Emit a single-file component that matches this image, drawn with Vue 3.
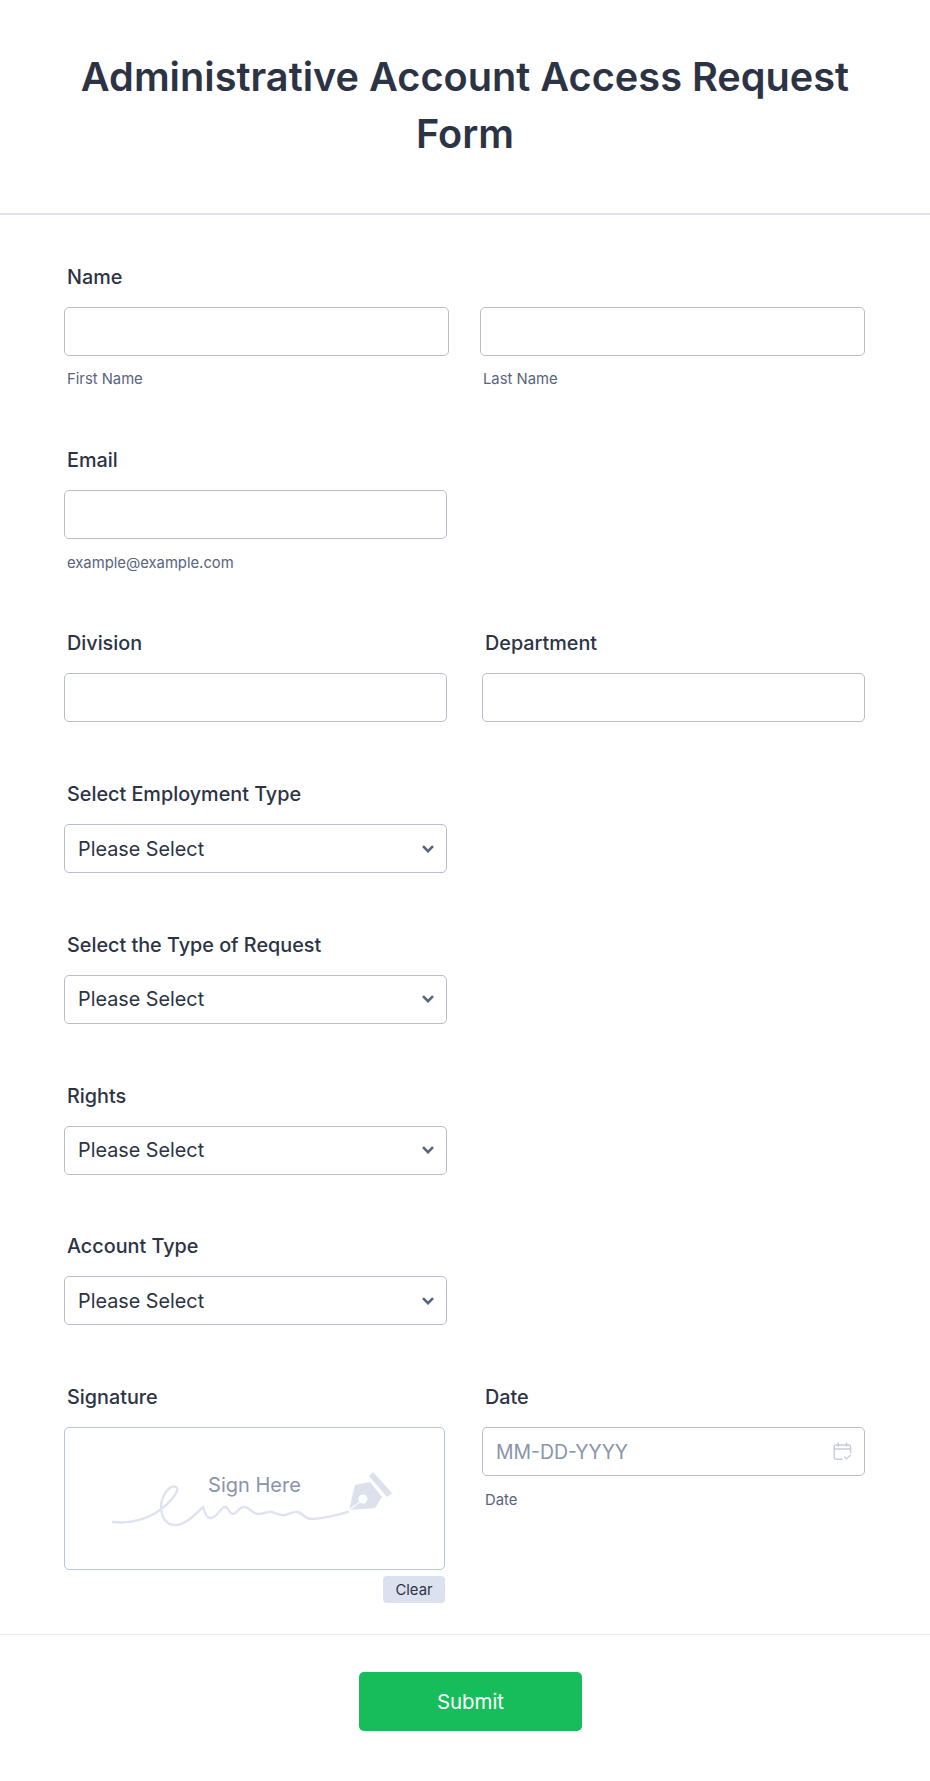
<script setup>
const selects = ['Select Employment Type', 'Select the Type of Request', 'Rights', 'Account Type']
</script>

<template>
  <div class="page">
    <header class="header">
      <h1 class="title">Administrative Account Access Request Form</h1>
    </header>

    <form class="form" @submit.prevent>
      <div class="row name-row">
        <div class="label">Name</div>
        <div class="pair">
          <div class="col wide">
            <input class="input" type="text" />
            <div class="sub">First Name</div>
          </div>
          <div class="col wide">
            <input class="input" type="text" />
            <div class="sub">Last Name</div>
          </div>
        </div>
      </div>

      <div class="row email-row">
        <div class="col half">
          <div class="label">Email</div>
          <input class="input" type="text" />
          <div class="sub low">example@example.com</div>
        </div>
      </div>

      <div class="row split">
        <div class="col half">
          <div class="label">Division</div>
          <input class="input" type="text" />
        </div>
        <div class="col right">
          <div class="label">Department</div>
          <input class="input" type="text" />
        </div>
      </div>

      <div class="row select-row" v-for="name in selects" :key="name">
        <div class="col half">
          <div class="label">{{ name }}</div>
          <div class="select">
            <span>Please Select</span>
            <svg class="chevron" width="12" height="8" viewBox="0 0 12 8" fill="none">
              <path d="M1 1.2 6 6.2 11 1.2" stroke="#57647e" stroke-width="2.6" />
            </svg>
          </div>
        </div>
      </div>

      <div class="row split last">
        <div class="col sig">
          <div class="label">Signature</div>
          <div class="pad">
            <svg class="scribble" width="381" height="143" viewBox="0 0 381 143" fill="none">
              <path
                d="M49 95C66 97 84 92 96 83C106 76 117 63 112 60C105 57 97 70 97 80C97 92 104 99 113 98C124 97 134 84 139 80C141 86 142 90 146 91C152 92 157 80 161 80C165 80 165 87 169 87C173 87 175 80 180 80C186 80 188 87 194 87C200 87 204 84 208 85C212 86 216 89 221 88C226 87 230 84 234 85C240 87 240 92 248 92C260 92 272 88 284 85"
                stroke="#dfe3f0" stroke-width="2.4" stroke-linecap="round"
              />
              <path d="M285 83 291 58 306 55 318 70 311 81Z" fill="#dde1ee" />
              <circle cx="299" cy="72" r="4.5" fill="#fff" />
              <path d="M285 83 297 74" stroke="#fff" stroke-width="1.2" />
              <path d="M309 45 328 66 323 70 305 49Z" fill="#dde1ee" />
            </svg>
            <span class="sign-here">Sign Here</span>
          </div>
          <div class="clear-wrap">
            <button class="clear" type="button">Clear</button>
          </div>
        </div>
        <div class="col right">
          <div class="label">Date</div>
          <div class="date">
            <span>MM-DD-YYYY</span>
            <svg width="19" height="19" viewBox="0 0 19 19" fill="none" stroke="#c8ccda" stroke-width="1.4" stroke-linecap="round">
              <path d="M9 17.3H3.2A2 2 0 0 1 1.2 15.3V5A2 2 0 0 1 3.2 3H15.6A2 2 0 0 1 17.6 5V10.5" />
              <path d="M1.2 7H17.6M5.3 1V4M13.5 1V4" />
              <path d="M11.5 15 13.5 17 17.5 13" stroke-width="1.1" />
            </svg>
          </div>
          <div class="sub low">Date</div>
        </div>
      </div>

      <div class="actions">
        <button class="submit" type="submit">Submit</button>
      </div>
    </form>
  </div>
</template>

<style>
body {
  background: #fff;
}
</style>

<style scoped>
.page {
  width: 930px;
  min-height: 1781px;
  background: #fff;
  color: #2c3345;
  font-family: Inter, "Liberation Sans", sans-serif;
}

.header {
  padding: 49px 65px 50px;
  border-bottom: 2px solid #dfe1ee;
  text-align: center;
}

.title {
  margin: 0;
  font-size: 39.7px;
  font-weight: 600;
  line-height: 57px;
}

.form {
  padding-top: 48px;
}

.row {
  padding: 0 65px 0 64px;
  margin-bottom: 58px;
}

.name-row {
  margin-bottom: 57px;
}

.email-row {
  margin-bottom: 56px;
}

.select-row {
  margin-bottom: 57.75px;
}

.split {
  display: flex;
  justify-content: space-between;
}

.col {
  display: flex;
  flex-direction: column;
}

.half {
  width: 383px;
}

.right {
  width: 383px;
}

.sig {
  width: 381px;
}

.pair {
  display: flex;
  gap: 31px;
}

.wide {
  flex: 1;
}

.label {
  margin: 1px 0 16px 3px;
  font-size: 19.8px;
  font-weight: 500;
  line-height: 27px;
}

.input,
.select,
.date {
  box-sizing: border-box;
  width: 100%;
  height: 49px;
  border: 1px solid #b8bdc9;
  border-radius: 5px;
  background: #fff;
  outline: none;
}

.select,
.date {
  display: flex;
  align-items: center;
  justify-content: space-between;
  padding: 0 12px 0 13px;
  font-size: 19.8px;
}

.date {
  color: #8894ab;
  font-size: 19.4px;
}

.sub {
  margin: 13px 0 0 3px;
  color: #57647e;
  font-size: 14.8px;
  line-height: 20px;
}

.low {
  margin-top: 14px;
}

.pad {
  position: relative;
  box-sizing: border-box;
  display: flex;
  justify-content: center;
  height: 143px;
  padding-top: 44px;
  border: 1px solid #b8c4d9;
  border-radius: 5px;
}

.scribble {
  position: absolute;
  top: -1px;
  left: -1px;
}

.sign-here {
  position: relative;
  color: #8a93ad;
  font-size: 20px;
  line-height: 26px;
}

.clear-wrap {
  display: flex;
  justify-content: flex-end;
  margin-top: 6px;
}

.clear {
  width: 62px;
  height: 27px;
  padding: 0;
  border: 0;
  border-radius: 4px;
  background: #dce1ef;
  color: #2c3345;
  font-family: inherit;
  font-size: 14.8px;
}

.last {
  margin-bottom: 31px;
}

.actions {
  display: flex;
  justify-content: center;
  padding: 37px 0 49px 11px;
  border-top: 1px solid #e8e9f1;
}

.submit {
  width: 223px;
  height: 59px;
  border: 0;
  border-radius: 5px;
  background: #18bd5b;
  color: #fff;
  font-family: inherit;
  font-size: 20.4px;
  font-weight: 400;
}
</style>
